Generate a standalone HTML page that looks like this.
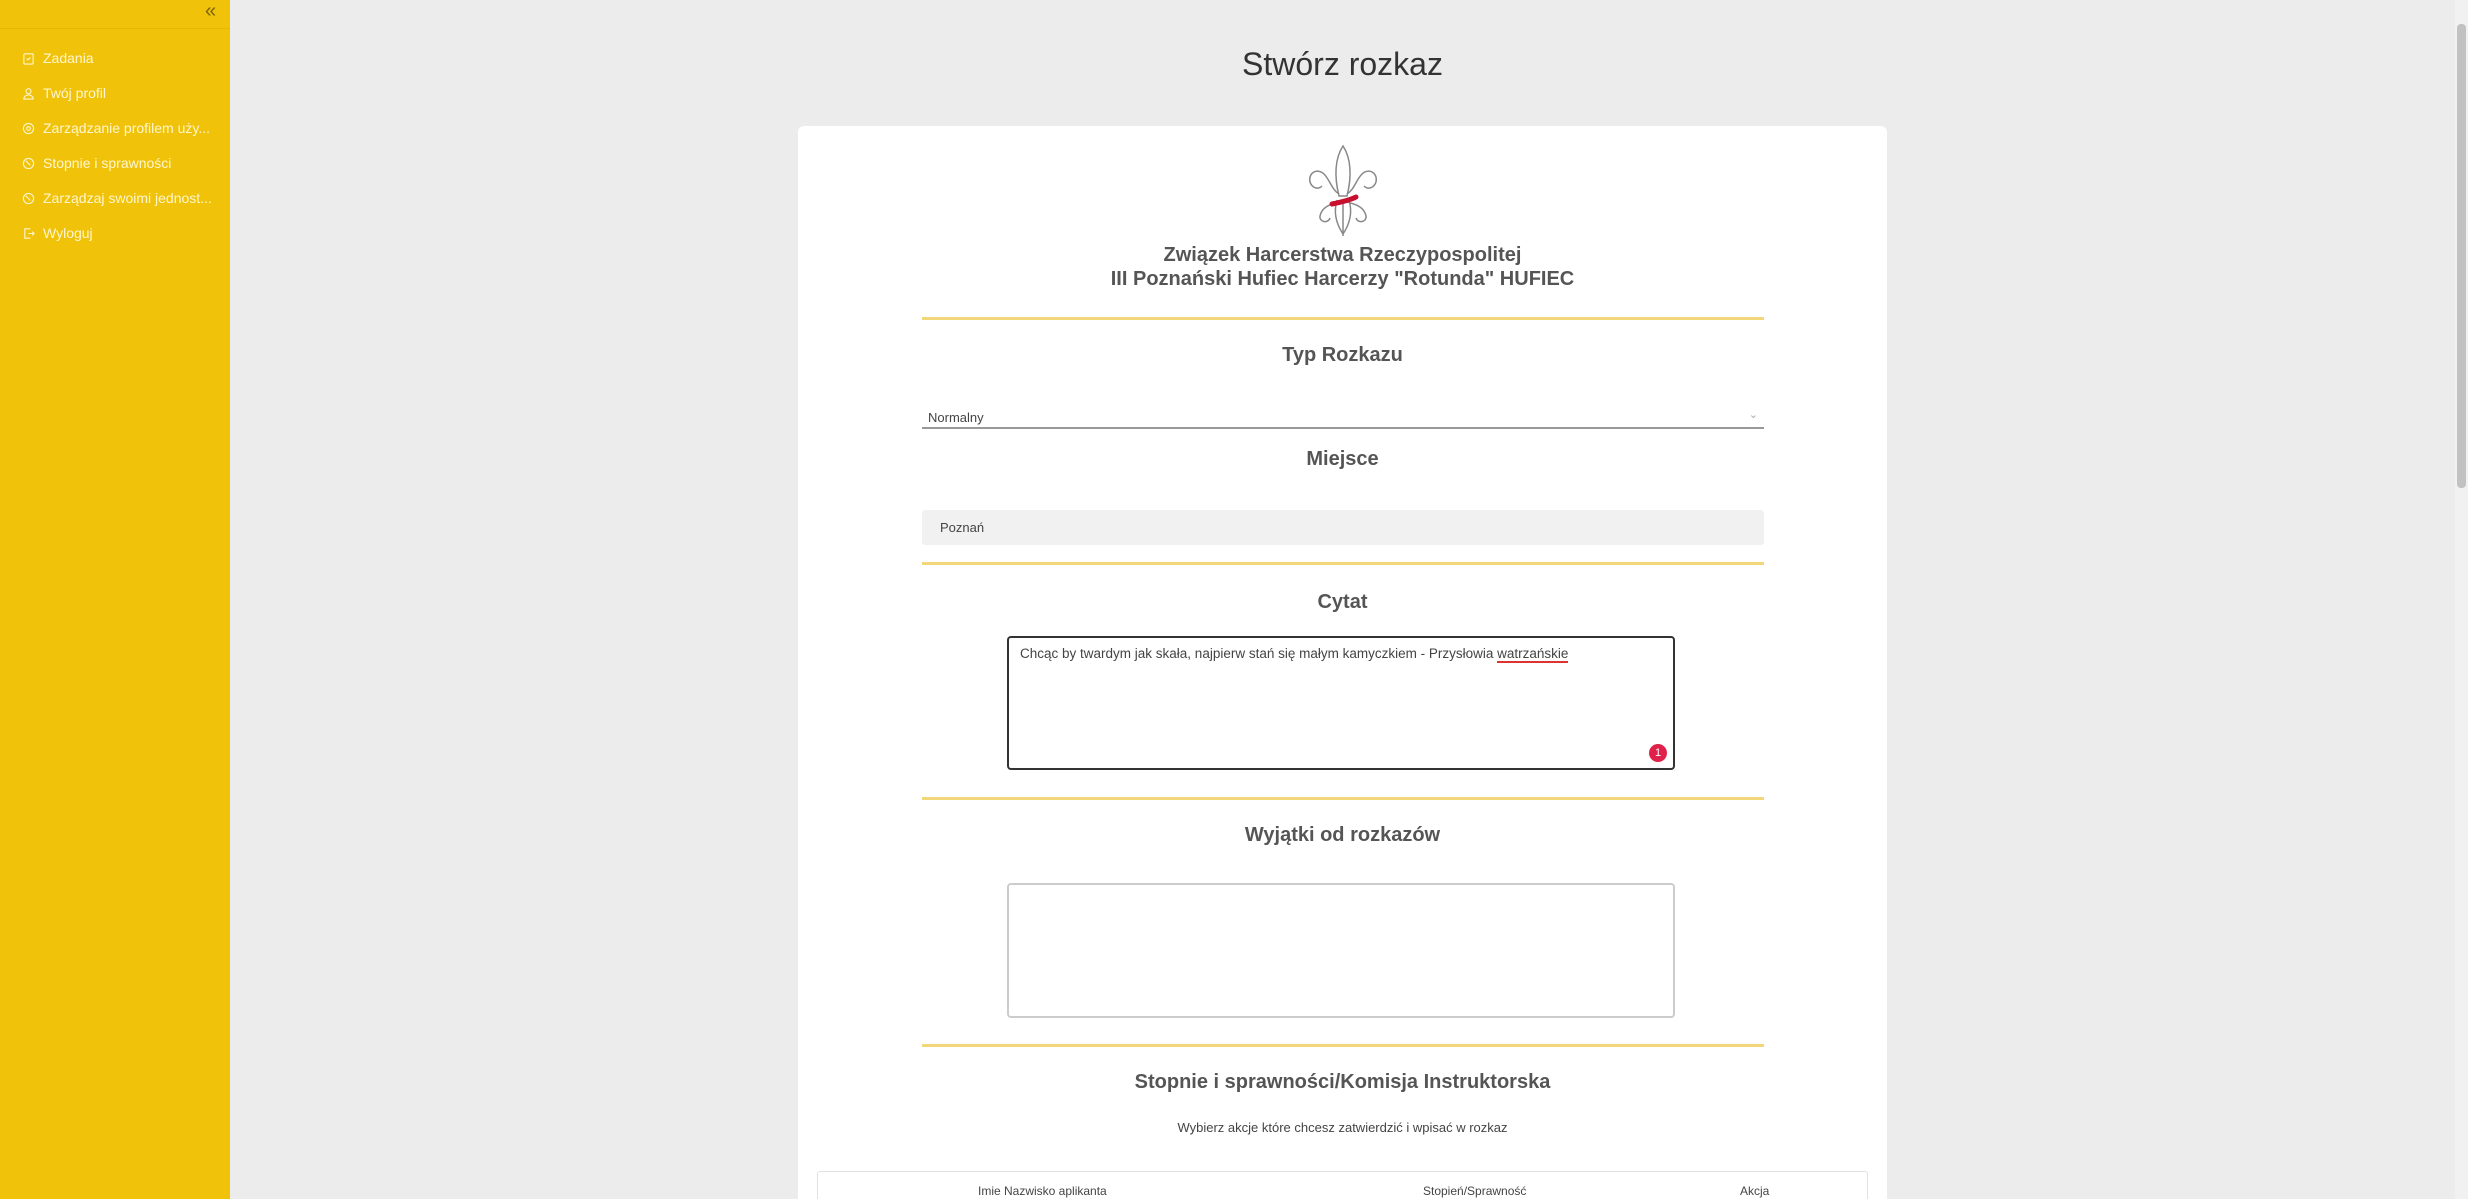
<!DOCTYPE html>
<html><head><meta charset="utf-8"><style>
*{box-sizing:border-box;margin:0;padding:0}
html,body{width:2468px;height:1199px;overflow:hidden}
body{background:#ececec;font-family:"Liberation Sans",sans-serif;position:relative;color:#555}
.sb{position:absolute;left:0;top:0;width:230px;height:1199px;background:#f0c20a}
.sb .hl{position:absolute;left:0;top:28px;width:230px;height:1px;background:#e4b800}
.sb .ch{position:absolute;left:205px;top:0;font-size:20px;color:#7a6410}
.it{position:absolute;left:22px;font-size:14px;color:#fff6cf;display:flex;align-items:center;gap:8px;white-space:nowrap}
.it svg{width:13px;height:13px}
.t{position:absolute;font-size:20px;font-weight:bold;color:#555;width:100%;text-align:center;left:0}
.title{position:absolute;left:230px;width:2225px;text-align:center;top:46px;font-size:32px;color:#333}
.card{position:absolute;left:798px;top:126px;width:1089px;height:1073px;background:#fff;border-radius:6px 6px 0 0;overflow:hidden}
.yl{position:absolute;left:124px;width:842px;height:3px;background:#f1d77a}
.sc{position:absolute;left:2455px;top:0;width:13px;height:1199px;background:#f1f1f1}
.sc div{position:absolute;left:2px;top:24px;width:9px;height:464px;background:#c1c1c1;border-radius:4px}
</style></head><body>
<div class="sb"><div class="ch">«</div><div class="hl"></div>
<div class="it" style="top:50px"><svg viewBox="0 0 14 14" fill="none" stroke="#fff6cf" stroke-width="1.2"><rect x="2" y="2" width="10" height="11" rx="1"/><path d="M5 7l1.5 1.5L9 6"/></svg>Zadania</div>
<div class="it" style="top:85px"><svg viewBox="0 0 14 14" fill="none" stroke="#fff6cf" stroke-width="1.2"><circle cx="7" cy="4.5" r="2.7"/><path d="M2 13c0-3 2.5-4.5 5-4.5s5 1.5 5 4.5z"/></svg>Twój profil</div>
<div class="it" style="top:120px"><svg viewBox="0 0 14 14" fill="none" stroke="#fff6cf" stroke-width="1.2"><circle cx="7" cy="7" r="5.5"/><circle cx="7" cy="7" r="2"/></svg>Zarządzanie profilem uży...</div>
<div class="it" style="top:155px"><svg viewBox="0 0 14 14" fill="none" stroke="#fff6cf" stroke-width="1.2"><circle cx="7" cy="7" r="5.5"/><path d="M4 4l5 5"/></svg>Stopnie i sprawności</div>
<div class="it" style="top:190px"><svg viewBox="0 0 14 14" fill="none" stroke="#fff6cf" stroke-width="1.2"><circle cx="7" cy="7" r="5.5"/><path d="M4 4l5 5"/></svg>Zarządzaj swoimi jednost...</div>
<div class="it" style="top:225px"><svg viewBox="0 0 14 14" fill="none" stroke="#fff6cf" stroke-width="1.2"><path d="M9 2H3v10h6M7 7h6M11 5l2 2-2 2"/></svg>Wyloguj</div>
</div>
<div class="title">Stwórz rozkaz</div>
<div class="card">
<svg style="position:absolute;left:508px;top:18px" width="74" height="94" viewBox="0 0 74 94" fill="none" stroke="#888" stroke-width="1.5">
<path d="M37 2C29 14 28 32 33 52h8C46 32 45 14 37 2z"/>
<path d="M33 50C26 46 24 36 18 30c-6-6-16-2-14 8 2 6 8 8 12 4"/>
<path d="M41 50C48 46 50 36 56 30c6-6 16-2 14 8-2 6-8 8-12 4"/>
<path d="M33 58C26 60 16 62 14 72c-1 6 8 8 10 2"/><path d="M41 58c7 2 17 4 19 14 1 6-8 8-10 2"/>
<path d="M37 56v36"/><path d="M31 56c-3 10-2 22 6 34M43 56c3 10 2 22-6 34"/>
<path d="M26 60c10-2 18-4 24-7" stroke="#c8102e" stroke-width="5" stroke-linecap="round"/>
</svg>
<div class="t" style="top:118px">Związek Harcerstwa Rzeczypospolitej</div>
<div class="t" style="top:142px">III Poznański Hufiec Harcerzy "Rotunda" HUFIEC</div>
<div class="yl" style="top:191px"></div>
<div class="t" style="top:218px">Typ Rozkazu</div>
<div style="position:absolute;left:124px;top:284px;width:842px;height:19px;border-bottom:2px solid #999;font-size:13px;padding-left:6px;color:#444">Normalny<span style="position:absolute;right:6px;top:-2px;color:#aaa;font-size:11px">⌄</span></div>
<div class="t" style="top:322px">Miejsce</div>
<div style="position:absolute;left:124px;top:384px;width:842px;height:35px;background:#f1f1f1;border-radius:3px;font-size:13px;padding:10px 18px;color:#444">Poznań</div>
<div class="yl" style="top:436px"></div>
<div class="t" style="top:465px">Cytat</div>
<div style="position:absolute;left:209px;top:510px;width:668px;height:134px;border:2px solid #333;border-radius:4px;font-size:13.5px;padding:8px 11px;color:#444">Chcąc by twardym jak skała, najpierw stań się małym kamyczkiem - Przysłowia <span style="border-bottom:2px solid #d33">watrzańskie</span>
<div style="position:absolute;right:6px;bottom:6px;width:18px;height:18px;border-radius:50%;background:#e0224a;color:#fff;font-size:11px;text-align:center;line-height:18px">1</div></div>
<div class="yl" style="top:671px"></div>
<div class="t" style="top:698px">Wyjątki od rozkazów</div>
<div style="position:absolute;left:209px;top:757px;width:668px;height:135px;border:2px solid #ccc;border-radius:4px"></div>
<div class="yl" style="top:918px"></div>
<div class="t" style="top:945px">Stopnie i sprawności/Komisja Instruktorska</div>
<div class="t" style="top:994px;font-size:13px;font-weight:normal;color:#444">Wybierz akcje które chcesz zatwierdzić i wpisać w rozkaz</div>
<div style="position:absolute;left:19px;top:1045px;width:1051px;height:80px;border:1px solid #e2e2e2;border-radius:3px;font-size:12px;color:#444">
<span style="position:absolute;left:160px;top:12px">Imie Nazwisko aplikanta</span>
<span style="position:absolute;left:605px;top:12px">Stopień/Sprawność</span>
<span style="position:absolute;left:922px;top:12px">Akcja</span></div>
</div>
<div class="sc"><div></div></div>
</body></html>
